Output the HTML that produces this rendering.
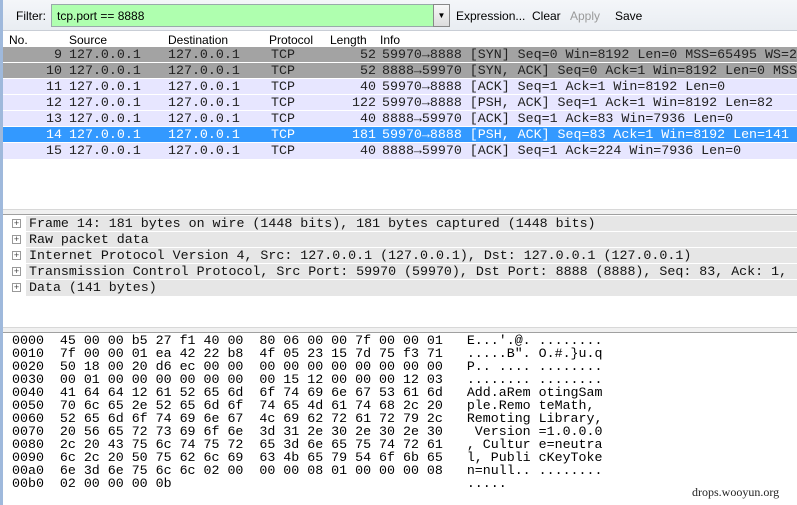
<!DOCTYPE html>
<html><head><meta charset="utf-8"><style>
*{margin:0;padding:0;box-sizing:border-box}
body{width:797px;height:505px;overflow:hidden;background:#fff;position:relative;font-family:"Liberation Sans",sans-serif}
.m{font-family:"Liberation Mono",monospace;font-size:13.3px;white-space:pre;position:absolute}
.a{position:absolute}
.r{height:16px;border-bottom:1px solid #fff;position:relative;color:#222}
.r span{font-family:"Liberation Mono",monospace;font-size:13.3px;white-space:pre;position:absolute;top:0}
.n{right:735px;text-align:right}
.s{left:66px}.d{left:165px}.p{left:268px}
.l{right:421px;text-align:right}
.i{left:379px}
.g{background:#a3a3a3}.v{background:#e7e6ff}.sel{background:#3399ff;color:#fff}
</style></head><body>
<div class="a" style="left:0;top:0;width:3px;height:505px;background:#9fb9dc"></div>
<div class="a" style="left:3px;top:0;width:794px;height:31px;background:linear-gradient(#f4f6f9,#e9edf2);border-bottom:1px solid #c9ced6"></div>
<div class="a" style="left:16px;top:9px;font-size:12px;color:#000">Filter:</div>
<div class="a" style="left:51px;top:4px;width:383px;height:23px;background:#afffaf;border:1px solid #9aa;font-size:12px;padding:4px 5px">tcp.port == 8888</div>
<div class="a" style="left:433px;top:4px;width:17px;height:23px;background:linear-gradient(#f8f8f8,#dcdcdc);border:1px solid #888;font-size:8px;text-align:center;padding-top:6px">▼</div>
<div class="a" style="left:456px;top:9px;font-size:12px">Expression...</div>
<div class="a" style="left:532px;top:9px;font-size:12px">Clear</div>
<div class="a" style="left:570px;top:9px;font-size:12px;color:#9a9a9a">Apply</div>
<div class="a" style="left:615px;top:9px;font-size:12px">Save</div>
<div class="a" style="left:3px;top:32px;width:794px;height:15px;background:#fff;font-size:12px">
<span class="a" style="left:6px;top:1px">No.</span><span class="a" style="left:66px;top:1px">Source</span><span class="a" style="left:165px;top:1px">Destination</span><span class="a" style="left:266px;top:1px">Protocol</span><span class="a" style="left:327px;top:1px">Length</span><span class="a" style="left:377px;top:1px">Info</span></div>
<div class="a" style="left:3px;top:47px;width:794px;overflow:hidden">
<div class="r g"><span class="n">9</span><span class="s">127.0.0.1</span><span class="d">127.0.0.1</span><span class="p">TCP</span><span class="l">52</span><span class="i">59970→8888 [SYN] Seq=0 Win=8192 Len=0 MSS=65495 WS=2</span></div>
<div class="r g"><span class="n">10</span><span class="s">127.0.0.1</span><span class="d">127.0.0.1</span><span class="p">TCP</span><span class="l">52</span><span class="i">8888→59970 [SYN, ACK] Seq=0 Ack=1 Win=8192 Len=0 MSS</span></div>
<div class="r v"><span class="n">11</span><span class="s">127.0.0.1</span><span class="d">127.0.0.1</span><span class="p">TCP</span><span class="l">40</span><span class="i">59970→8888 [ACK] Seq=1 Ack=1 Win=8192 Len=0</span></div>
<div class="r v"><span class="n">12</span><span class="s">127.0.0.1</span><span class="d">127.0.0.1</span><span class="p">TCP</span><span class="l">122</span><span class="i">59970→8888 [PSH, ACK] Seq=1 Ack=1 Win=8192 Len=82</span></div>
<div class="r v"><span class="n">13</span><span class="s">127.0.0.1</span><span class="d">127.0.0.1</span><span class="p">TCP</span><span class="l">40</span><span class="i">8888→59970 [ACK] Seq=1 Ack=83 Win=7936 Len=0</span></div>
<div class="r sel"><span class="n">14</span><span class="s">127.0.0.1</span><span class="d">127.0.0.1</span><span class="p">TCP</span><span class="l">181</span><span class="i">59970→8888 [PSH, ACK] Seq=83 Ack=1 Win=8192 Len=141</span></div>
<div class="r v" style="border:0"><span class="n">15</span><span class="s">127.0.0.1</span><span class="d">127.0.0.1</span><span class="p">TCP</span><span class="l">40</span><span class="i">8888→59970 [ACK] Seq=1 Ack=224 Win=7936 Len=0</span></div>
</div>
<div class="a" style="left:3px;top:209px;width:794px;height:6px;background:#f0f0f0;border-top:1px solid #d8d8d8;border-bottom:1px solid #a0a0a0"></div>
<div class="a" style="left:8px;top:216px;width:789px">
<div style="height:16px;position:relative;border-bottom:1px solid #fff;background:#e6e6e6;margin-left:18px"><span class="m" style="left:3px;top:0;color:#111">Frame 14: 181 bytes on wire (1448 bits), 181 bytes captured (1448 bits)</span></div>
<div style="height:16px;position:relative;border-bottom:1px solid #fff;background:#e6e6e6;margin-left:18px"><span class="m" style="left:3px;top:0;color:#111">Raw packet data</span></div>
<div style="height:16px;position:relative;border-bottom:1px solid #fff;background:#e6e6e6;margin-left:18px"><span class="m" style="left:3px;top:0;color:#111">Internet Protocol Version 4, Src: 127.0.0.1 (127.0.0.1), Dst: 127.0.0.1 (127.0.0.1)</span></div>
<div style="height:16px;position:relative;border-bottom:1px solid #fff;background:#e6e6e6;margin-left:18px"><span class="m" style="left:3px;top:0;color:#111">Transmission Control Protocol, Src Port: 59970 (59970), Dst Port: 8888 (8888), Seq: 83, Ack: 1, </span></div>
<div style="height:16px;position:relative;background:#e6e6e6;margin-left:18px"><span class="m" style="left:3px;top:0;color:#111">Data (141 bytes)</span></div>
</div>
<div class="a" style="left:12px;top:219px;width:9px;height:9px;border:1px solid #999;font-size:9px;line-height:7px;text-align:center;color:#444">+</div>
<div class="a" style="left:12px;top:235px;width:9px;height:9px;border:1px solid #999;font-size:9px;line-height:7px;text-align:center;color:#444">+</div>
<div class="a" style="left:12px;top:251px;width:9px;height:9px;border:1px solid #999;font-size:9px;line-height:7px;text-align:center;color:#444">+</div>
<div class="a" style="left:12px;top:267px;width:9px;height:9px;border:1px solid #999;font-size:9px;line-height:7px;text-align:center;color:#444">+</div>
<div class="a" style="left:12px;top:283px;width:9px;height:9px;border:1px solid #999;font-size:9px;line-height:7px;text-align:center;color:#444">+</div>
<div class="a" style="left:3px;top:327px;width:794px;height:6px;background:#f0f0f0;border-top:1px solid #d8d8d8;border-bottom:1px solid #a0a0a0"></div>
<div class="m" style="left:12px;top:334px;font-size:13.3px;line-height:13px;color:#000">0000  45 00 00 b5 27 f1 40 00  80 06 00 00 7f 00 00 01   E...'.@. ........
0010  7f 00 00 01 ea 42 22 b8  4f 05 23 15 7d 75 f3 71   .....B". O.#.}u.q
0020  50 18 00 20 d6 ec 00 00  00 00 00 00 00 00 00 00   P.. .... ........
0030  00 01 00 00 00 00 00 00  00 15 12 00 00 00 12 03   ........ ........
0040  41 64 64 12 61 52 65 6d  6f 74 69 6e 67 53 61 6d   Add.aRem otingSam
0050  70 6c 65 2e 52 65 6d 6f  74 65 4d 61 74 68 2c 20   ple.Remo teMath, 
0060  52 65 6d 6f 74 69 6e 67  4c 69 62 72 61 72 79 2c   Remoting Library,
0070  20 56 65 72 73 69 6f 6e  3d 31 2e 30 2e 30 2e 30    Version =1.0.0.0
0080  2c 20 43 75 6c 74 75 72  65 3d 6e 65 75 74 72 61   , Cultur e=neutra
0090  6c 2c 20 50 75 62 6c 69  63 4b 65 79 54 6f 6b 65   l, Publi cKeyToke
00a0  6e 3d 6e 75 6c 6c 02 00  00 00 08 01 00 00 00 08   n=null.. ........
00b0  02 00 00 00 0b                                     .....</div>
<div class="a" style="left:692px;top:485px;font-family:'Liberation Serif',serif;font-size:12px;color:#222">drops.wooyun.org</div>
</body></html>
